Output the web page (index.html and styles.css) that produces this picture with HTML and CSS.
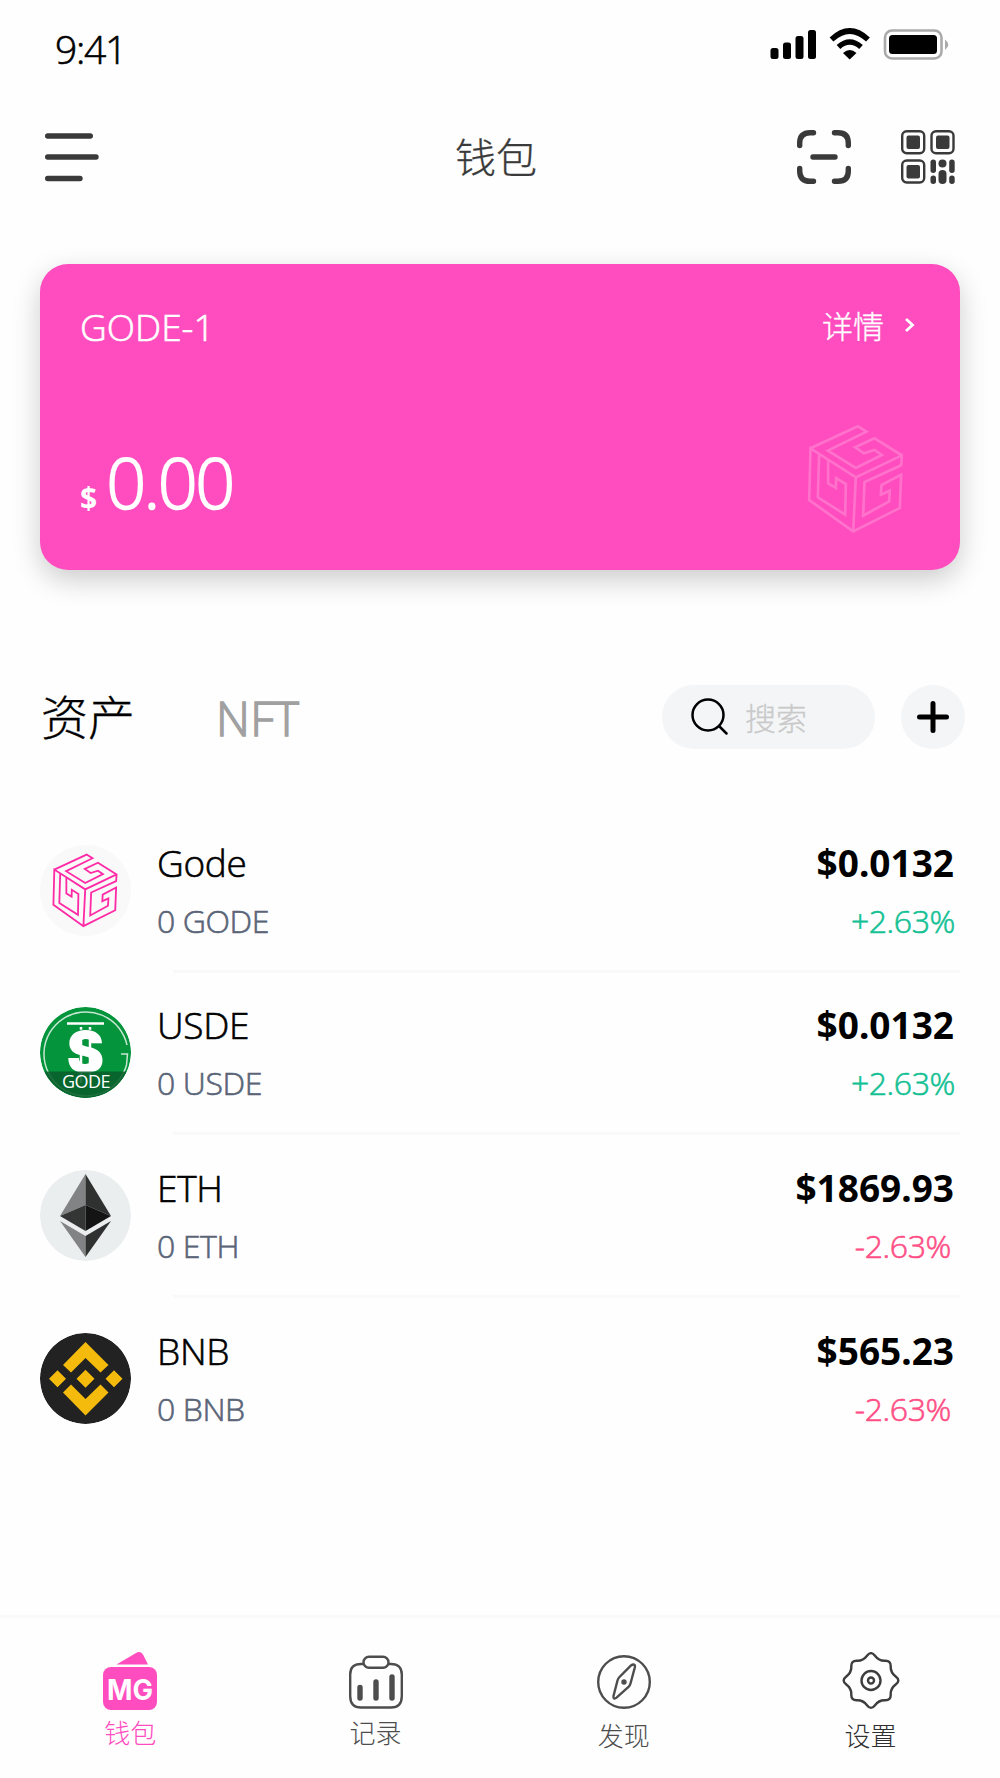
FILE: index.html
```html
<!DOCTYPE html>
<html lang="zh-CN">
<head>
    <meta charset="utf-8">
    <title>钱包</title>
    <link rel="stylesheet" href="styles.css">
</head>
<body>
    <svg class="defs" width="0" height="0">
        <symbol id="cube" viewBox="84 400 290 330">
            <path d="M94 473L236 407L262 423L146 480L230 532L308 493L286 478L254 488L228 470L286 443L368 494L366 524L256 574L252 675L330 632L332 600L305 612L307 583L366 552L362 652L222 722L90 628L94 473L230 560L368 494M230 560L222 722M120 490L116 620L198 672L200 580L171 562L170 592L147 578L147 506"/>
        </symbol>
    </svg>

    <div class="status-bar">
        <span class="time">9:41</span>
        <svg width="182" height="34" viewBox="0 0 182 34">
            <rect x="0.5" y="20" width="8" height="11" rx="2.5"/>
            <rect x="13" y="14.5" width="8" height="16.5" rx="2.5"/>
            <rect x="25.5" y="8" width="8" height="23" rx="2.5"/>
            <rect x="38" y="2" width="8" height="29" rx="2.5"/>
            <g class="wifi">
                <path d="M61.5 11.5Q79.7 -5.5 98 11.5"/>
                <path d="M68.5 19Q79.7 9 91 19"/>
            </g>
            <path d="M73 25Q79.7 19 86.500 25L79.700 31.500Z"/>
            <rect class="battery" x="115" y="2.500" width="56.500" height="28" rx="7"/>
            <rect x="119" y="7" width="48" height="19" rx="3.500"/>
            <path class="nub" d="M175 11.500Q181.500 16.500 175 22Z"/>
        </svg>
    </div>

    <header class="header">
        <svg class="menu" width="54" height="50" viewBox="0 0 54 50">
            <path d="M2.700 4H45.300M2.700 25H51M2.700 46.500H35"/>
        </svg>
        <h1>钱包</h1>
        <div class="actions">
            <svg class="scan" width="54" height="54" viewBox="0 0 54 54">
                <path d="M2.700 15.500V13Q2.700 2.700 13 2.700H16.500M37.500 2.700H41Q51.300 2.700 51.300 13V15.500M51.300 38.500V41Q51.300 51.300 41 51.300H37.500M16.500 51.300H13Q2.700 51.300 2.700 41V38.500M16 27H38"/>
            </svg>
            <svg class="qr" width="54" height="54" viewBox="0 0 54 54">
                <g class="qr-frame">
                    <rect x="1.200" y="1.200" width="22" height="22" rx="4.500"/>
                    <rect x="30.500" y="1.200" width="22" height="22" rx="4.500"/>
                    <rect x="1.200" y="30.500" width="22" height="22" rx="4.500"/>
                </g>
                <rect x="5.500" y="5.500" width="13.500" height="13.500" rx="2"/>
                <rect x="35" y="5.500" width="13.500" height="13.500" rx="2"/>
                <rect x="5.500" y="35" width="13.500" height="13.500" rx="2"/>
                <rect x="29.500" y="29.500" width="5.500" height="13.500" rx="2.700"/>
                <rect x="29.500" y="45.500" width="5.500" height="8.500" rx="2.700"/>
                <circle cx="41.500" cy="33.500" r="4"/>
                <rect x="37.500" y="40" width="8" height="14" rx="4"/>
                <rect x="48.200" y="29.500" width="5.500" height="13.500" rx="2.700"/>
                <rect x="48.200" y="45.500" width="5.500" height="8.500" rx="2.700"/>
            </svg>
        </div>
    </header>

    <section class="card">
        <div class="card-top">
            <span class="wallet-name">GODE-1</span>
            <a class="details">详情
                <svg width="11" height="16" viewBox="0 0 11 16"><path d="M2 2L8.500 8L2 14"/></svg>
            </a>
        </div>
        <div class="card-bottom">
            <div class="balance"><b>$</b><span>0.00</span></div>
            <svg class="card-cube" width="97" height="110"><use href="#cube"/></svg>
        </div>
    </section>

    <div class="tabs">
        <span class="tab tab-assets">资产</span>
        <span class="tab tab-nft">NFT</span>
        <div class="search">
            <svg width="38" height="38" viewBox="0 0 38 38"><circle cx="17" cy="17" r="15.500"/><path d="M28.500 28.500L35.500 35.500"/></svg>
            <span>搜索</span>
        </div>
        <div class="add">
            <svg width="32" height="32" viewBox="0 0 32 32"><path d="M16 2.500V29.500M2.500 16H29.500"/></svg>
        </div>
    </div>

    <main class="assets">
        <div class="asset">
            <div class="coin coin-gode"><svg width="66" height="75"><use href="#cube"/></svg></div>
            <div class="info">
                <div class="name"><span>Gode</span><b>$0.0132</b></div>
                <div class="amount"><span>0 GODE</span><span class="up">+2.63%</span></div>
            </div>
        </div>
        <div class="asset">
            <svg class="coin" viewBox="0 0 91 91">
                <circle cx="45.500" cy="45.500" r="45.500" fill="#04943c"/>
                <path d="M87 38A42 42 0 1 0 86.500 58L87.500 47H81" fill="none" stroke="#c5e6d0" stroke-width="1.500"/>
                <path d="M27 16.500H64" stroke="#fff" stroke-width="2.600"/>
                <path d="M41 20V76M50 20V76" stroke="#fff" stroke-width="2.500"/>
                <path d="M38 23.300H54" stroke="#04943c" stroke-width="1.200"/>
                <text class="coin-dollar" x="45.500" y="65">S</text>
                <path d="M4.200 64.500H86.800A45.500 45.500 0 0 1 4.200 64.500Z" fill="#085e2b" fill-opacity=".88"/>
                <text class="coin-label" x="46" y="80.500">GODE</text>
            </svg>
            <div class="info">
                <div class="name"><span>USDE</span><b>$0.0132</b></div>
                <div class="amount"><span>0 USDE</span><span class="up">+2.63%</span></div>
            </div>
        </div>
        <div class="asset">
            <svg class="coin" viewBox="0 0 91 91">
                <circle cx="45.500" cy="45.500" r="45.500" fill="#ebeeef"/>
                <path d="M45.500 4L20 46L45.500 35Z" fill="#828384"/>
                <path d="M45.500 4L71 46L45.500 35Z" fill="#2f3030"/>
                <path d="M20 46L45.500 35V61Z" fill="#343535"/>
                <path d="M71 46L45.500 35V61Z" fill="#141414"/>
                <path d="M20 51L45.500 66V87Z" fill="#828384"/>
                <path d="M71 51L45.500 66V87Z" fill="#2f3030"/>
            </svg>
            <div class="info">
                <div class="name"><span>ETH</span><b>$1869.93</b></div>
                <div class="amount"><span>0 ETH</span><span class="down">-2.63%</span></div>
            </div>
        </div>
        <div class="asset">
            <svg class="coin" viewBox="0 0 91 91">
                <circle cx="45.500" cy="45.500" r="45.500" fill="#222"/>
                <path fill="#f5bb0c" d="M45.500 9L68.500 32L60.500 39.500L45.500 25L31 39.500L23 32ZM45.500 82.500L68.500 59.500L60.500 51.500L45.500 66L31 51.500L23 59.500ZM45.500 36.700L54.500 45.700L45.500 54.700L36.500 45.700ZM17.500 37.200L26 45.700L17.500 54.200L9 45.700ZM74 37.200L82.500 45.700L74 54.200L65.500 45.700Z"/>
            </svg>
            <div class="info">
                <div class="name"><span>BNB</span><b>$565.23</b></div>
                <div class="amount"><span>0 BNB</span><span class="down">-2.63%</span></div>
            </div>
        </div>
    </main>

    <nav class="nav">
        <a class="nav-item active">
            <svg width="54" height="58" viewBox="0 0 54 58">
                <path d="M13.500 12.500L33 1Q37 -1.500 40 2.500L45 12.500Z"/>
                <rect x="0" y="15" width="54" height="43" rx="8"/>
                <text x="27" y="48" textLength="46" lengthAdjust="spacingAndGlyphs">MG</text>
            </svg>
            <span>钱包</span>
        </a>
        <a class="nav-item records">
            <svg width="54" height="58" viewBox="0 0 54 58">
                <path d="M14.500 12H12Q1.200 12 1.200 22.500V44Q1.200 55.500 12 55.500H42Q52.800 55.500 52.800 44V22.500Q52.800 12 42 12H39.500"/>
                <rect x="14.500" y="4.700" width="25" height="11" rx="5.500"/>
                <path class="bars" d="M11 35.500V46M27 30V46M43 25V46"/>
            </svg>
            <span>记录</span>
        </a>
        <a class="nav-item low">
            <svg width="54" height="58" viewBox="0 0 54 58">
                <circle cx="27" cy="30" r="25.800"/>
                <path d="M34 13.500C36.500 11.500 38.500 12.500 37.800 15.500L33.500 31.500Q33 33.500 31.500 35L19.500 45.700C17.500 47.400 16 46.400 16.500 44L20.500 28.500Q21 26.500 22.500 25Z"/>
                <circle class="dot" cx="27" cy="30" r="2.700"/>
            </svg>
            <span>发现</span>
        </a>
        <a class="nav-item low dark">
            <svg width="58" height="58" viewBox="-29 -28.500 58 58">
                <path d="M24.700 4Q19.400 8 19.700 14Q20 20 14 19.700Q8 19.400 4 24.700Q0 30 -4 24.700Q-8 19.400 -14 19.700Q-20 20 -19.700 14Q-19.400 8 -24.700 4Q-30 0 -24.700 -4Q-19.400 -8 -19.700 -14Q-20 -20 -14 -19.700Q-8 -19.400 -4 -24.700Q0 -30 4 -24.700Q8 -19.400 14 -19.700Q20 -20 19.700 -14Q19.400 -8 24.700 -4Q30 0 24.700 4Z"/>
                <circle r="9.500"/>
                <circle r="3"/>
            </svg>
            <span>设置</span>
        </a>
    </nav>
</body>
</html>
```

FILE: styles.css
```css
* {
    box-sizing: border-box;
}
body {
    margin: 0;
    width: 1000px;
    height: 1778px;
    display: flex;
    flex-direction: column;
    background: #fefefe;
    color: #000;
    font-family: "Open Sans", "Noto Sans CJK SC", sans-serif;
    font-weight: 300;
    -webkit-text-stroke: .6px;
}
svg {
    display: block;
    flex-shrink: 0;
}
b {
    font-weight: 700;
    -webkit-text-stroke: 0;
}
.defs {
    position: absolute;
}
.status-bar {
    height: 100px;
    padding: 28px 48px 0 55px;
    display: flex;
    justify-content: space-between;
}
.time {
    font-size: 39px;
    line-height: 42px;
    letter-spacing: -1.3px;
}
.wifi {
    fill: none;
    stroke: #000;
    stroke-width: 5.5;
}
.battery {
    fill: none;
    stroke: #aaa;
    stroke-width: 2.6;
}
.nub {
    fill: #aaa;
}
.header {
    height: 114px;
    padding: 0 45px;
    display: grid;
    grid-template-columns: 1fr auto 1fr;
    align-items: center;
    color: #3a3a3a;
}
h1 {
    margin: 0 8px 4px 0;
    font-family: "Noto Sans CJK SC", sans-serif;
    font-size: 41px;
    font-weight: 300;
    line-height: 60px;
    -webkit-text-stroke: .3px;
}
.menu, .scan {
    fill: none;
    stroke: #3a3a3a;
    stroke-width: 5.4;
    stroke-linecap: round;
}
.actions {
    display: flex;
    justify-content: flex-end;
    gap: 50px;
}
.qr {
    fill: #3a3a3a;
}
.qr-frame {
    fill: none;
    stroke: #3a3a3a;
    stroke-width: 2.4;
}
.card {
    margin: 50px 40px 0;
    height: 306px;
    padding: 33px 45px 0 40px;
    background: #ff4dbf;
    border-radius: 28px;
    box-shadow: 0 10px 28px rgba(0, 0, 0, .2);
    color: #fff;
}
.card-top {
    display: flex;
    justify-content: space-between;
}
.wallet-name {
    font-size: 37px;
    line-height: 60px;
}
.details {
    display: flex;
    align-items: center;
    gap: 20px;
    height: 55px;
    font-family: "Noto Sans CJK SC", sans-serif;
    font-size: 31px;
    -webkit-text-stroke: .3px;
}
.details svg {
    fill: none;
    stroke: #fff;
    stroke-width: 2.8;
}
.card-bottom {
    display: flex;
    justify-content: space-between;
    align-items: center;
    margin-top: 62px;
}
.balance {
    display: flex;
    align-items: baseline;
    gap: 9px;
    margin-top: 12px;
    line-height: 102px;
}
.balance b {
    font-size: 30px;
}
.balance span {
    font-size: 70px;
    letter-spacing: -2.5px;
    -webkit-text-stroke: 1.6px;
}
.card-cube {
    margin: 0 11px 11px 0;
    fill: none;
    stroke: #ff72cc;
    stroke-width: 8;
}
.tabs {
    margin: 115px 35px 0 41px;
    height: 64px;
    display: flex;
    align-items: center;
}
.tab-assets {
    width: 175px;
    padding-bottom: 4px;
    font-family: "Noto Sans CJK SC", sans-serif;
    font-size: 47px;
    line-height: 64px;
    -webkit-text-stroke: .3px;
}
.tab-nft {
    padding-top: 2px;
    color: #a0a0a0;
    font-size: 47px;
    line-height: 64px;
    letter-spacing: .4px;
    -webkit-text-stroke: 1.4px;
}
.search {
    width: 213px;
    height: 64px;
    margin-left: auto;
    padding-left: 29px;
    display: flex;
    align-items: center;
    gap: 16px;
    background: #f4f5f7;
    border-radius: 32px;
    color: #c9c9c9;
    font-family: "Noto Sans CJK SC", sans-serif;
    font-size: 31px;
    -webkit-text-stroke: .3px;
}
.search span {
    padding-bottom: 2px;
}
.search svg {
    fill: none;
    stroke: #000;
    stroke-width: 2.5;
    stroke-linecap: round;
}
.add {
    width: 64px;
    height: 64px;
    margin-left: 26px;
    display: grid;
    place-items: center;
    background: #f4f5f7;
    border-radius: 50%;
}
.add svg {
    stroke: #000;
    stroke-width: 5;
    stroke-linecap: round;
}
.assets {
    margin: 61px 40px 0;
}
.asset {
    height: 162.67px;
    display: grid;
    grid-template-columns: 91px 1fr;
    column-gap: 26px;
    align-items: center;
    background: linear-gradient(#f9f9f9, #f9f9f9) 133px 100% / 100% 3px no-repeat;
}
.asset:last-child {
    background: none;
}
.coin {
    width: 91px;
    height: 91px;
    margin-bottom: 2px;
    border-radius: 50%;
}
.coin-gode {
    display: grid;
    place-items: center;
    padding-right: 1px;
    background: #f9f9f9;
    fill: none;
    stroke: #ff2ba6;
    stroke-width: 8;
}
.coin-dollar, .coin-label {
    fill: #fff;
    text-anchor: middle;
    -webkit-text-stroke: 0;
}
.coin-dollar {
    font: 900 56px Inter, sans-serif;
}
.coin-label {
    font-size: 18px;
    font-weight: 400;
    letter-spacing: -.5px;
}
.info {
    padding: 2px 5px 0 0;
}
.name, .amount {
    display: flex;
    justify-content: space-between;
}
.name {
    font-size: 37px;
    line-height: 56px;
    letter-spacing: -.3px;
}
.name b {
    margin-right: 1px;
    font-family: "Noto Sans", sans-serif;
    letter-spacing: 0;
}
.amount {
    color: #5a6578;
    font-size: 32px;
    line-height: 59px;
    letter-spacing: -.4px;
}
.up {
    color: #14c194;
}
.down {
    padding-right: 4px;
    color: #ff4f86;
}
.nav {
    height: 163px;
    margin-top: auto;
    padding: 34px 6px 0 7px;
    display: grid;
    grid-template-columns: repeat(4, 1fr);
    border-top: 3px solid #f9f9f9;
}
.nav-item {
    display: flex;
    flex-direction: column;
    align-items: center;
    gap: 4px;
    color: #4d4d4d;
    font-family: "Noto Sans CJK SC", sans-serif;
    font-size: 26px;
    line-height: 36px;
    -webkit-text-stroke: 0;
}
.nav-item svg {
    fill: none;
    stroke: #4d4d4d;
    stroke-width: 2.4;
}
.nav-item .bars {
    stroke-width: 5.4;
    stroke-linecap: round;
}
.nav-item .dot {
    fill: #4d4d4d;
    stroke: none;
}
.nav-item.records {
    padding-right: 3px;
}
.nav-item.low {
    gap: 7px;
}
.nav-item.dark {
    color: #2f2f2f;
}
.nav-item.dark svg {
    stroke: #3d3d3d;
}
.nav-item.active {
    color: #ff4dbf;
}
.nav-item.active svg {
    fill: #ff4dbf;
    stroke: none;
}
.nav-item.active text {
    fill: #fefefe;
    font: 700 29px Inter, sans-serif;
    text-anchor: middle;
}
```
